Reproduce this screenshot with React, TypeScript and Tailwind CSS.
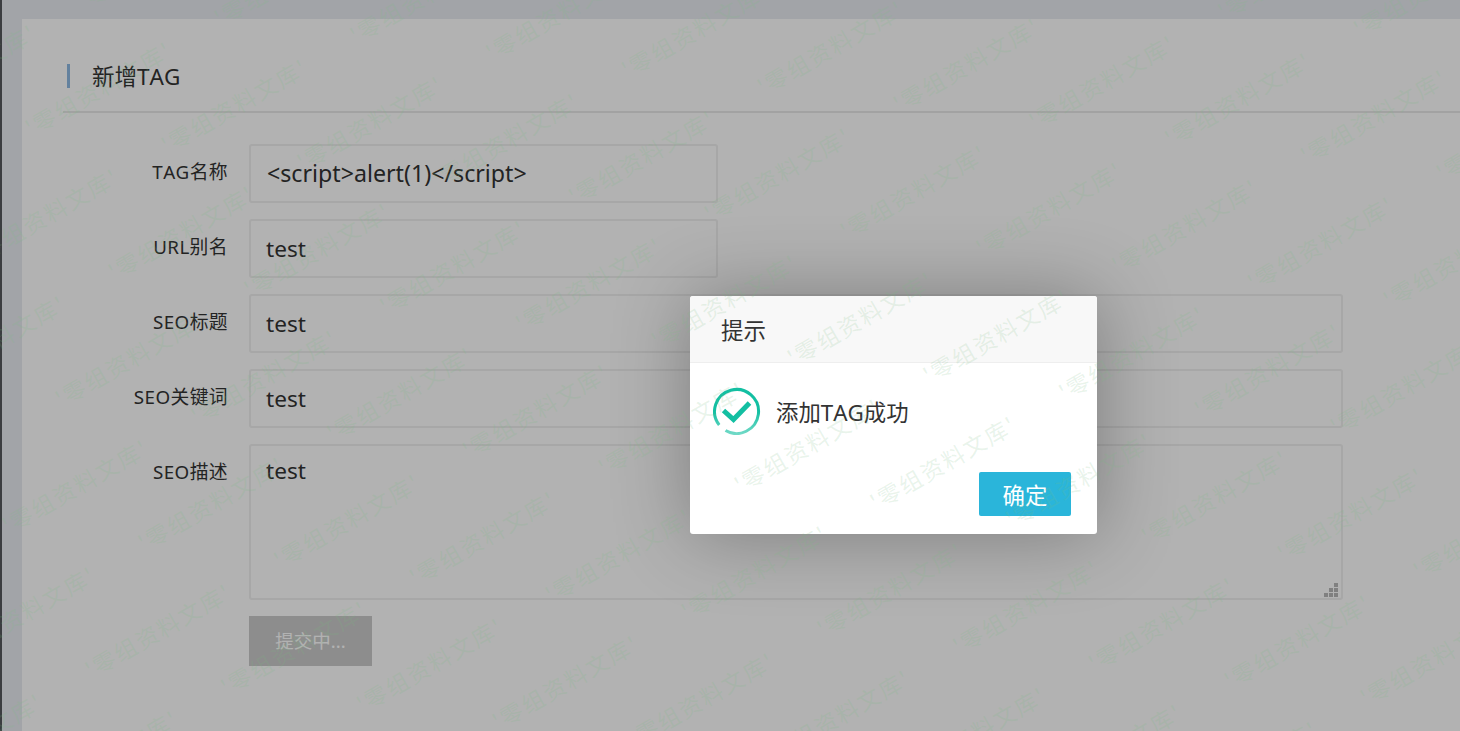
import { Fragment } from "react";

const FONT = "font-['Noto_Sans','Noto_Sans_CJK_SC',sans-serif]";

const MARKS: { x: number; y: number }[] = [];
for (let row = -2; row <= 6; row++) {
  for (let col = -6; col <= 14; col++) {
    const x = 27 + col * 135.8 - row * 53;
    const y = 125 + col * 17.2 + row * 126.9;
    if (x > -130 && x < 1456 && y > -4 && y < 805) MARKS.push({ x, y });
  }
}

function Watermark() {
  return (
    <div className="pointer-events-none absolute inset-0 z-30 overflow-hidden font-['Noto_Sans_CJK_SC',sans-serif]" aria-hidden="true">
      {MARKS.map((m, i) => (
        <span
          key={i}
          className="absolute top-0 left-0 origin-left text-[22.5px] leading-none tracking-[2.1px] whitespace-nowrap text-[rgba(120,190,128,0.17)]"
          style={{ transform: `translate(${m.x}px, ${m.y - 7.5}px) rotate(-29.8deg)` }}
        >
          '零组资料文库'
        </span>
      ))}
    </div>
  );
}

function Label({ text }: { text: string }) {
  return (
    <label className="pt-[14px] pr-[21px] text-right text-[18.8px] leading-7 tracking-[0.4px] text-[#333] [font-kerning:none]">
      {text}
    </label>
  );
}

function Field({ label, value, wide = false }: { label: string; value: string; wide?: boolean }) {
  return (
    <Fragment>
      <Label text={label} />
      <div
        className={
          "flex h-[59px] items-center rounded-[3px] border-2 border-[#efefef] pr-4 text-[#333] " +
          (wide ? "w-[1094px] " : "w-[469px] ") +
          (value === "test" ? "pl-[15px] text-[22.6px]" : "pl-4 text-[23.2px]")
        }
      >
        {value}
      </div>
    </Fragment>
  );
}

function GripIcon() {
  return (
    <svg className="absolute right-[3px] bottom-px h-[14px] w-[14px]" viewBox="0 0 14 14" fill="#b8b8b8">
      <rect x="10" y="0" width="4" height="4" />
      <rect x="5" y="5" width="4" height="4" />
      <rect x="10" y="5" width="4" height="4" />
      <rect x="0" y="10" width="4" height="4" />
      <rect x="5" y="10" width="4" height="4" />
      <rect x="10" y="10" width="4" height="4" />
    </svg>
  );
}

function Dialog() {
  return (
    <div className="absolute top-[296px] left-[690px] z-20 flex h-[238px] w-[407px] flex-col rounded-[3px] bg-white shadow-[1px_1px_78px_rgba(0,0,0,0.3)]">
      <div className="flex h-[67px] items-center rounded-t-[3px] border-b border-[#eee] bg-[#f8f8f8] pt-[3px] pl-[31px] text-[22.5px] text-[#333]">
        提示
      </div>
      <div className="flex items-center gap-[15px] pt-[24px] pl-[23px] text-[22.4px] text-[#333]">
        <svg className="h-[48px] w-[48px]" viewBox="0 0 48 48" fill="none" stroke="#13bfa2">
          <defs>
            <linearGradient id="ring" x1="0" y1="0" x2="0" y2="1">
              <stop offset="0.5" stopColor="#13bfa2" />
              <stop offset="1" stopColor="#6fd9c6" />
            </linearGradient>
          </defs>
          <path d="M6.2 38 A22 22 0 1 1 12.5 43.5" stroke="url(#ring)" strokeWidth="3" />
          <path d="M10.5 23.5 L20.5 32.5 L36.5 16" strokeWidth="5" />
        </svg>
        <span className="pt-1 [font-kerning:none]">添加TAG成功</span>
      </div>
      <div className="mt-auto flex justify-end pr-[26px] pb-[18px]">
        <button className="h-[44px] w-[92px] rounded-[2px] bg-[#2ab5da] pt-[3px] text-[22.4px] leading-[42px] text-white">确定</button>
      </div>
    </div>
  );
}

export default function App() {
  return (
    <div className={"relative flex h-[731px] w-[1460px] overflow-hidden bg-[#e8ebf1] " + FONT}>
      <div className="w-[2px] shrink-0 bg-[#55585c]" />
      <main className="mt-[19px] ml-5 flex-1 bg-white pl-[41px]">
        <header className="flex h-[94px] items-center border-b-2 border-[#e8e8e8] pt-[21px] pl-1">
          <div className="h-6 w-[3px] bg-[#8fb9e3]" />
          <h1 className="pt-[2px] pl-[22px] text-[22.5px] text-[#333] [font-kerning:none]">新增TAG</h1>
        </header>
        <form className="grid grid-cols-[186px_1fr] gap-y-4 pt-[31px]">
          <Field label="TAG名称" value="<script>alert(1)</script>" />
          <Field label="URL别名" value="test" />
          <Field label="SEO标题" value="test" wide />
          <Field label="SEO关键词" value="test" wide />
          <Label text="SEO描述" />
          <div className="relative h-[156px] w-[1094px] rounded-[3px] border-2 border-[#efefef] pt-2 pr-4 pl-[15px] text-[22.6px] text-[#333]">
            test
            <GripIcon />
          </div>
          <button
            type="button"
            className="col-start-2 h-[50px] w-[123px] bg-[#cbcbcb] text-[18.5px] text-white"
          >
            提交中...
          </button>
        </form>
      </main>
      <div className="absolute inset-0 z-10 bg-black/30" />
      <Dialog />
      <Watermark />
    </div>
  );
}
